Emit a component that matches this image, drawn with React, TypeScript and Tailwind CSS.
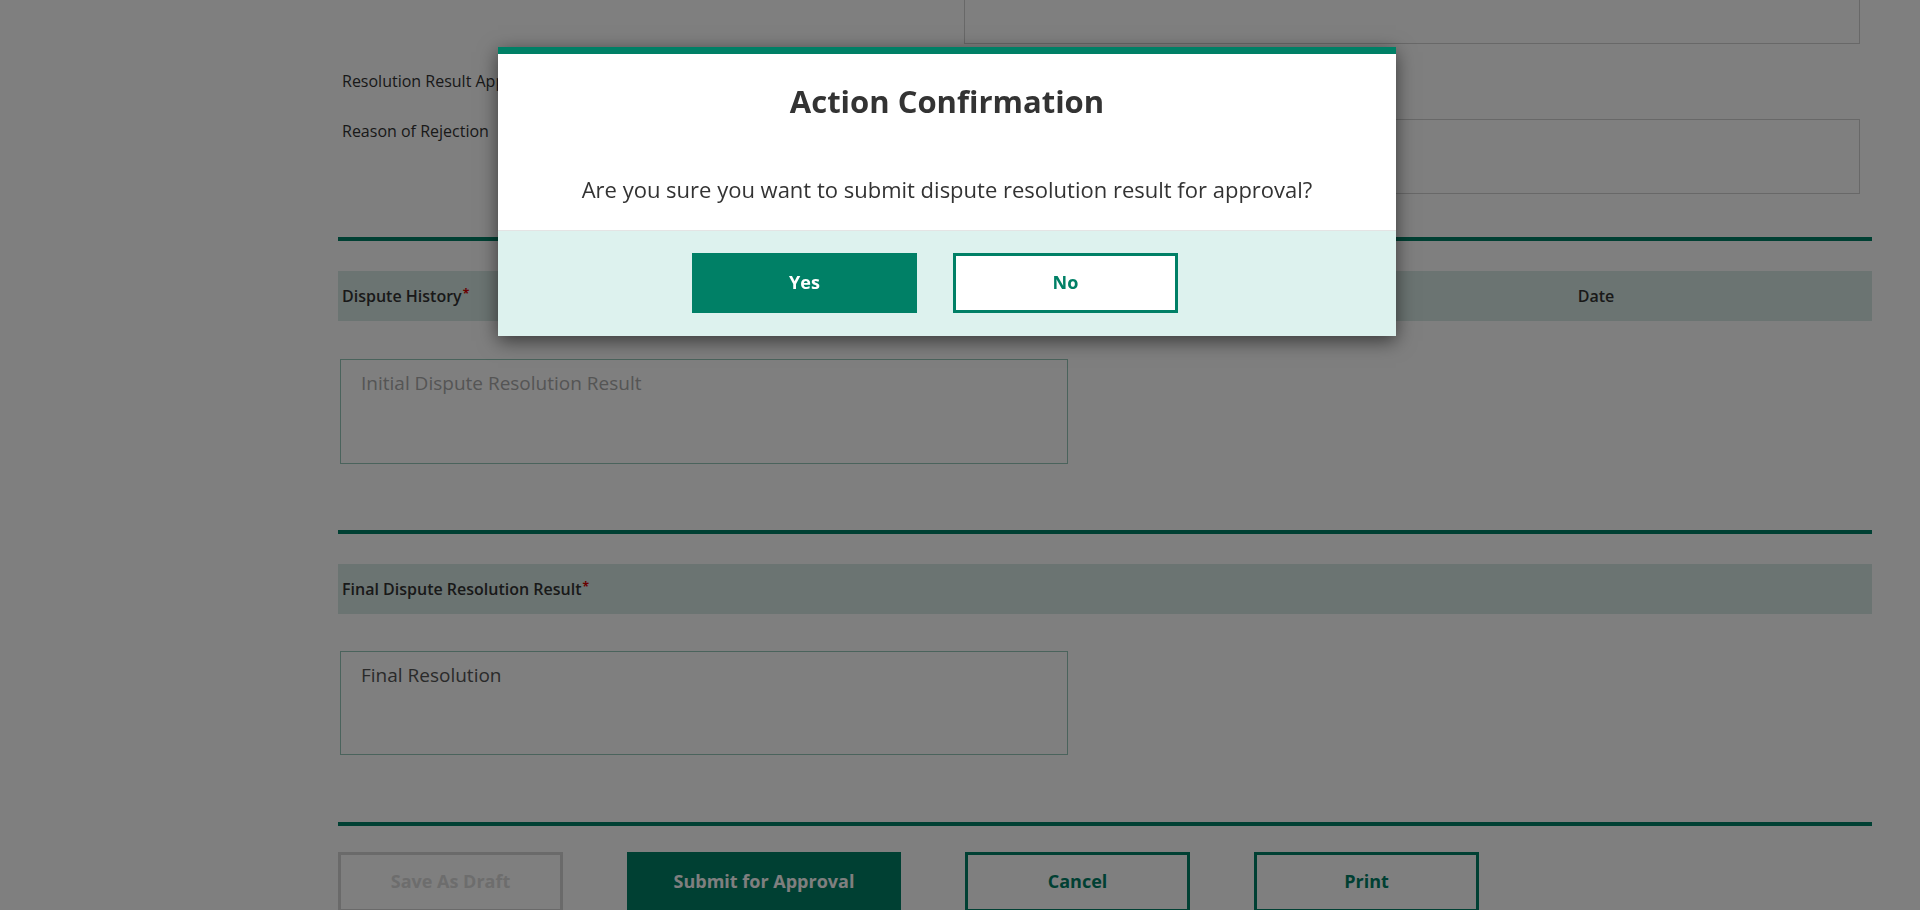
import React from "react";

const GREEN = "#008066";

function Required() {
  return <span className="relative -top-[4px] ml-[1px] text-[12px] font-bold text-[#d40000]">*</span>;
}

function SectionHeader({ title, date }: { title: string; date?: boolean }) {
  return (
    <div className="mt-[30px] flex h-[50px] items-center bg-[#d6e8e4] pl-[4px] text-[16px] font-semibold text-[#333]">
      <div className="flex-1">
        {title}
        <Required />
      </div>
      {date && <div className="w-[300px] text-center">Date</div>}
      {date && <div className="w-[126px]" />}
    </div>
  );
}

export default function App() {
  return (
    <div className="relative h-[910px] overflow-hidden bg-white font-['Open_Sans',sans-serif] text-[#333]">
      {/* underlying form, scrolled a little */}
      <div className="-mt-[30px] pl-[338px] pr-[48px]">
        <div className="flex">
          <div className="w-[626px]" />
          <div className="h-[74px] w-[896px] border border-[#d0d0d0] px-[20px] pt-[5px] text-[19px] leading-[28px] text-[#555]">
            Final Resolution
          </div>
        </div>
        <div className="flex h-[75px]">
          <div className="w-[626px] pl-[4px] pt-[25px] text-[16px] leading-[24px]">Resolution Result Approval</div>
        </div>
        <div className="flex">
          <div className="w-[626px] pl-[4px] text-[16px] leading-[24px]">Reason of Rejection</div>
          <textarea
            readOnly
            className="h-[75px] w-[896px] resize-none border border-[#d0d0d0] px-[20px] py-[9px] text-[19px] outline-none"
          />
        </div>

        <div className="mt-[43px] h-[4px]" style={{ background: GREEN }} />
        <SectionHeader title="Dispute History" date />
        <textarea
          readOnly
          placeholder="Initial Dispute Resolution Result"
          className="ml-[2px] mt-[38px] block h-[105px] w-[728px] resize-none border border-[#94c6b8] px-[20px] py-[9px] text-[19px] leading-[28px] outline-none placeholder:text-[#aaa]"
        />

        <div className="mt-[66px] h-[4px]" style={{ background: GREEN }} />
        <SectionHeader title="Final Dispute Resolution Result" />
        <textarea
          readOnly
          value="Final Resolution"
          className="ml-[2px] mt-[37px] block h-[104px] w-[728px] resize-none border border-[#94c6b8] px-[20px] py-[9px] text-[19px] leading-[28px] text-[#555] outline-none"
        />

        <div className="mt-[67px] h-[4px]" style={{ background: GREEN }} />
        <div className="mt-[26px] flex gap-[64px] text-[18px] font-bold leading-[24px]">
          <button className="h-[60px] w-[225px] border-[3px] border-[#d4d4d4] pb-[3px] text-[#dadada]">Save As Draft</button>
          <button className="h-[60px] w-[274px] bg-[#008066] pb-[3px] text-white">Submit for Approval</button>
          <button className="h-[60px] w-[225px] border-[3px] border-[#008066] pb-[3px] text-[#008066]">Cancel</button>
          <button className="h-[60px] w-[225px] border-[3px] border-[#008066] pb-[3px] text-[#008066]">Print</button>
        </div>
      </div>

      {/* overlay */}
      <div className="fixed inset-0 bg-black/50" />

      {/* confirmation dialog */}
      <div className="absolute left-[498px] top-[47px] w-[898px] border-t-[7px] border-[#008066] bg-white shadow-[0_5px_18px_rgba(0,0,0,0.55)]">
        <div className="pb-[26px] pt-[27px] text-center">
          <h2 className="text-[31px] font-bold leading-[40px] text-[#333]">Action Confirmation</h2>
          <p className="mt-[53px] text-[22px] leading-[30px] text-[#333]">
            Are you sure you want to submit dispute resolution result for approval?
          </p>
        </div>
        <div className="flex justify-center gap-[36px] border-t border-[#e4e4e4] bg-[#ddf2ee] pb-[23px] pr-[24px] pt-[22px] text-[18px] font-bold leading-[24px]">
          <button className="h-[60px] w-[225px] bg-[#008066] pb-[2px] text-white">Yes</button>
          <button className="h-[60px] w-[225px] border-[3px] border-[#008066] bg-white pb-[2px] text-[#008066]">No</button>
        </div>
      </div>
    </div>
  );
}
